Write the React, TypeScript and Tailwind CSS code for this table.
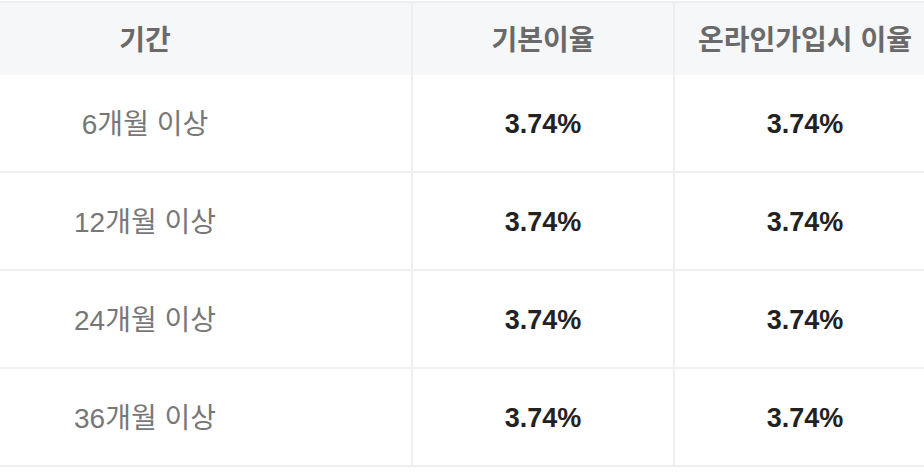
import React from 'react';

const rows = ['6개월 이상', '12개월 이상', '24개월 이상', '36개월 이상'];

export default function App() {
  return (
    <div className="w-[924px] h-[476px] overflow-hidden bg-white pt-px" style={{ fontFamily: '"Liberation Sans", "Noto Sans CJK KR", sans-serif' }}>
      <div className="w-[940px] border-t-2 border-[#efefef]">
        <div className="grid grid-cols-[411px_262px_267px] h-[72px] bg-[#f6f7f9] text-[28px] font-bold text-[#6a6a6a]">
          <div className="flex items-center justify-center pr-[121px] pt-[4px]">기간</div>
          <div className="flex items-center justify-center border-l-2 border-[#efefef] pt-[4px]">기본이율</div>
          <div className="flex items-center justify-center border-l-2 border-[#efefef] pr-[5px] pt-[4px]">온라인가입시 이율</div>
        </div>
        {rows.map((label) => (
          <div key={label} className="grid grid-cols-[411px_262px_267px] h-[98px] border-b-2 border-[#efefef]">
            <div className="flex items-center justify-center pr-[121px] pt-[4px] text-[28px] text-[#777777]">{label}</div>
            <div className="flex items-center justify-center border-l-2 border-[#efefef] pt-[2px] text-[27px] font-bold text-[#222222]">3.74%</div>
            <div className="flex items-center justify-center border-l-2 border-[#efefef] pr-[5px] pt-[2px] text-[27px] font-bold text-[#222222]">3.74%</div>
          </div>
        ))}
      </div>
    </div>
  );
}
